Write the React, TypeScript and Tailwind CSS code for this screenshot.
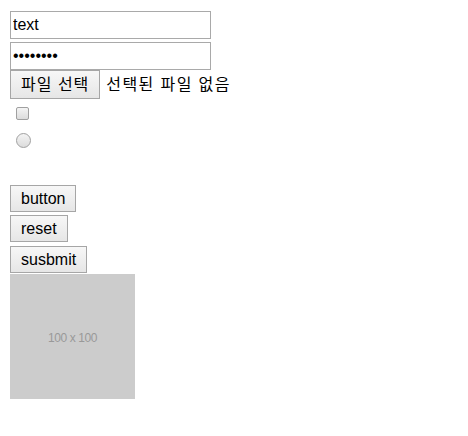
import React from 'react';

const font = { fontFamily: '"Liberation Sans", "Noto Sans CJK KR", Arial, sans-serif' };

function Btn({ children, className = '' }: { children: React.ReactNode; className?: string }) {
  return (
    <button
      type="button"
      className={`flex h-[27px] items-center border border-[#a6a6a6] bg-gradient-to-b from-[#f7f7f7] to-[#e6e6e6] px-[10px] text-[16px] leading-none text-black ${className}`}
    >
      {children}
    </button>
  );
}

export default function App() {
  return (
    <div className="flex min-h-[436px] w-[468px] flex-col items-start bg-white pl-[10px] pt-[11px] text-black" style={font}>
      <input
        type="text"
        defaultValue="text"
        className="h-[28px] w-[201px] border border-[#a9a9a9] px-[2px] text-[16px] text-black outline-none"
      />
      <input
        type="password"
        defaultValue="12345678"
        className="mt-[3px] h-[28px] w-[201px] border border-[#a9a9a9] px-[2px] text-[16px] text-black outline-none"
      />

      {/* file picker, drawn by hand so the labels stay Korean */}
      <div className="flex items-center">
        <Btn className="h-[29px] px-[10px] tracking-[1px]">파일 선택</Btn>
        <span className="ml-[6px] text-[16px] tracking-[1.4px]">선택된 파일 없음</span>
      </div>

      <div className="ml-[6px] mt-[8px] h-[13px] w-[13px] rounded-[2px] border border-[#a0a0a0] bg-gradient-to-b from-[#f4f4f4] to-[#dcdcdc]" />
      <div className="ml-[6px] mt-[13px] h-[15px] w-[15px] rounded-full border border-[#a0a0a0] bg-gradient-to-b from-[#f4f4f4] to-[#dcdcdc]" />

      <Btn className="mt-[37px]">button</Btn>
      <Btn className="mt-[3px]">reset</Btn>
      <Btn className="mt-[4px]">susbmit</Btn>

      <div className="mt-[1px] flex h-[125px] w-[125px] items-center justify-center bg-[#cccccc] pt-[3px]">
        <span className="text-[12px] tracking-[-0.4px] text-[#999999]">100 x 100</span>
      </div>
    </div>
  );
}
